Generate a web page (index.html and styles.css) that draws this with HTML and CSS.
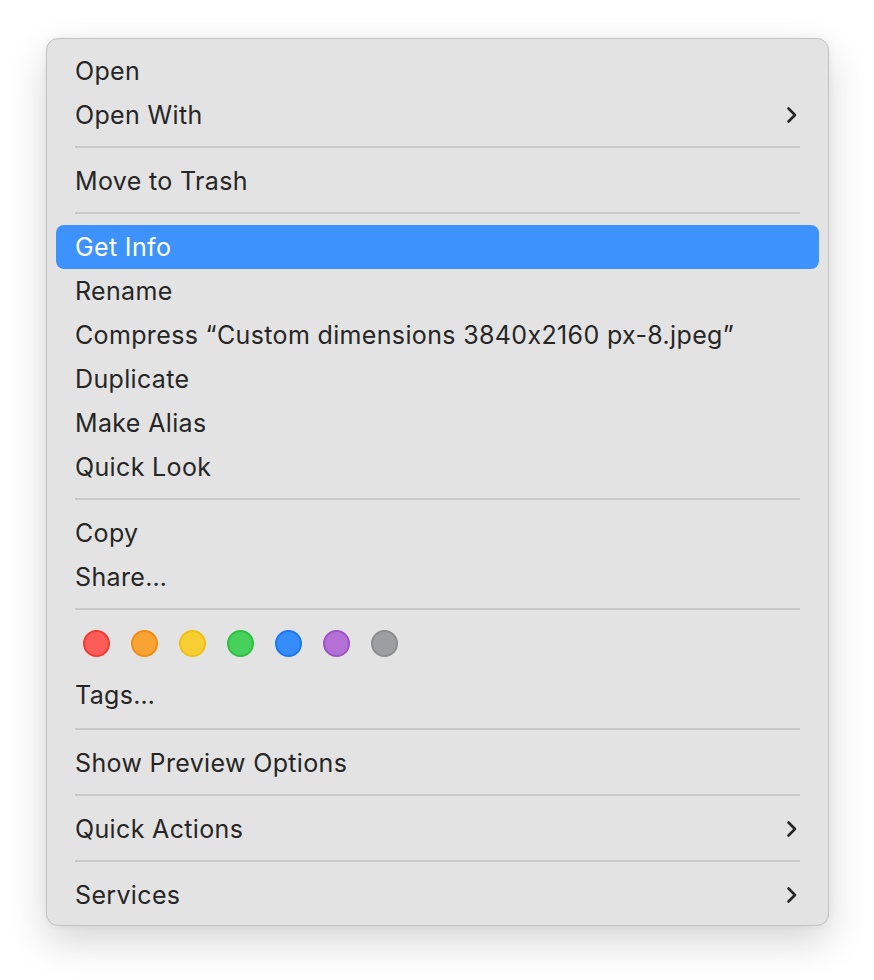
FILE: index.html
```html
<!DOCTYPE html>
<html lang="en">
<head>
<meta charset="utf-8">
<title>Context Menu</title>
<link rel="stylesheet" href="styles.css">
</head>
<body>
<div class="menu">
  <div class="item">Open</div>
  <div class="item">Open With<svg class="chev" viewBox="0 0 12 18"><path d="M2.5 2.5 L9 9 L2.5 15.5"/></svg></div>
  <div class="sep"></div>
  <div class="item">Move to Trash</div>
  <div class="sep"></div>
  <div class="item active">Get Info</div>
  <div class="item">Rename</div>
  <div class="item">Compress “Custom dimensions 3840x2160 px-8.jpeg”</div>
  <div class="item">Duplicate</div>
  <div class="item">Make Alias</div>
  <div class="item">Quick Look</div>
  <div class="sep"></div>
  <div class="item">Copy</div>
  <div class="item">Share…</div>
  <div class="sep"></div>
  <div class="tags">
    <span class="dot red"></span>
    <span class="dot orange"></span>
    <span class="dot yellow"></span>
    <span class="dot green"></span>
    <span class="dot blue"></span>
    <span class="dot purple"></span>
    <span class="dot gray"></span>
  </div>
  <div class="item">Tags…</div>
  <div class="sep sep-wide"></div>
  <div class="item">Show Preview Options</div>
  <div class="sep"></div>
  <div class="item">Quick Actions<svg class="chev" viewBox="0 0 12 18"><path d="M2.5 2.5 L9 9 L2.5 15.5"/></svg></div>
  <div class="sep"></div>
  <div class="item">Services<svg class="chev" viewBox="0 0 12 18"><path d="M2.5 2.5 L9 9 L2.5 15.5"/></svg></div>
</div>
</body>
</html>
```
FILE: styles.css
```css
html, body {
  margin: 0;
  padding: 0;
  background: #ffffff;
}
body {
  min-height: 980px;
  box-sizing: border-box;
  padding: 38px 0 0 46px;
  font-family: Inter, "Noto Sans", "Liberation Sans", sans-serif;
}
.menu {
  box-sizing: border-box;
  width: 783px;
  height: 888px;
  background: #e3e3e3;
  border: 1px solid #c2c2c2;
  border-radius: 12px;
  padding: 10px 9px 8px;
  box-shadow: 0 16px 38px rgba(0, 0, 0, 0.16), 0 0 8px rgba(0, 0, 0, 0.05);
}
.item {
  height: 44px;
  display: flex;
  align-items: center;
  justify-content: space-between;
  padding: 0 21px 0 19px;
  font-size: 25px;
  color: #262626;
  letter-spacing: 0.35px;
  border-radius: 8px;
}
.item.active {
  background: #3d92fd;
  color: #ffffff;
}
.chev {
  width: 12px;
  height: 18px;
  fill: none;
  stroke: #262626;
  stroke-width: 2.6;
  stroke-linecap: round;
  stroke-linejoin: round;
}
.sep {
  height: 2px;
  margin: 9px 19px 11px;
  background: #c9c9c9;
}
.sep.sep-wide {
  margin-top: 11px;
}
.tags {
  display: flex;
  gap: 21px;
  padding: 9px 0 16px 27px;
}
.dot {
  box-sizing: border-box;
  width: 27px;
  height: 27px;
  border-radius: 50%;
  border: 2px solid;
}
.red { background: #fe5d57; border-color: #f23a33; }
.orange { background: #f8a435; border-color: #f28b10; }
.yellow { background: #f7cf33; border-color: #f0bf14; }
.green { background: #48d05d; border-color: #2cbf3e; }
.blue { background: #368cfa; border-color: #1a76f2; }
.purple { background: #b470d5; border-color: #9e52c8; }
.gray { background: #9d9ea2; border-color: #8b8c90; }
```
